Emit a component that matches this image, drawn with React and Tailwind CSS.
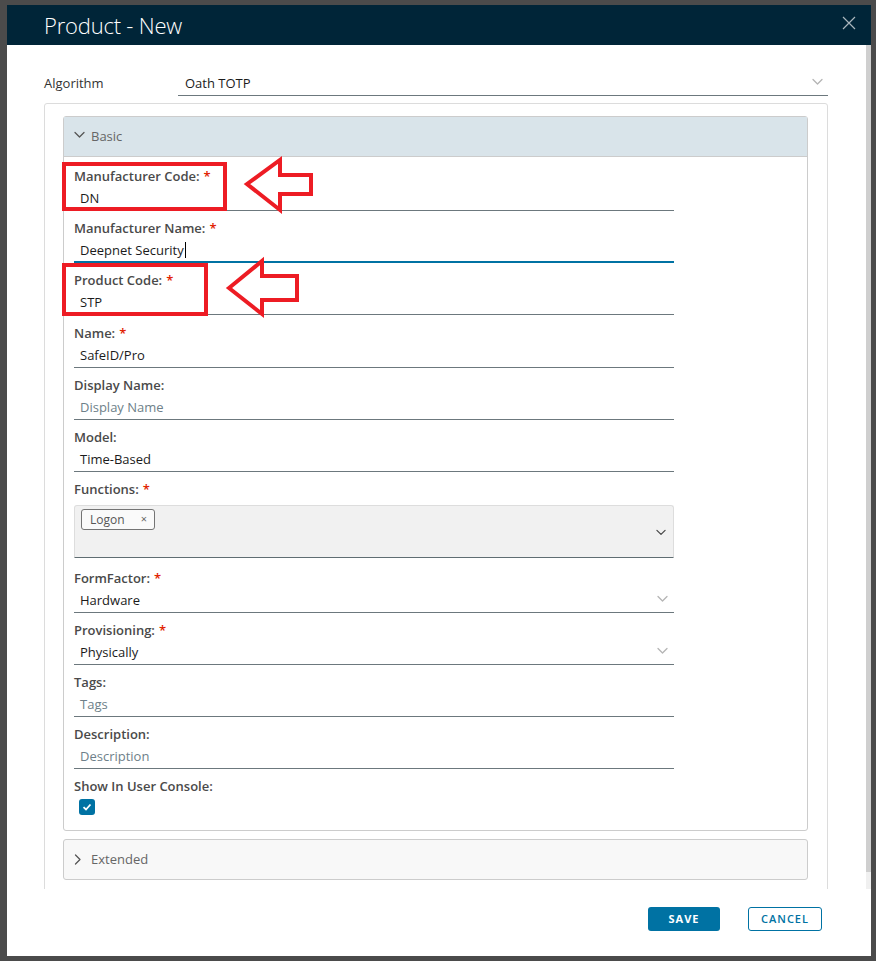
import React from "react";

const font = "font-['Open_Sans','Liberation_Sans',sans-serif]";

function Chevron({ className = "", dir = "down" }) {
  const d = dir === "down" ? "M1 1.5 L5.5 6 L10 1.5" : "M1.5 1 L6 5.5 L1.5 10";
  return (
    <svg viewBox="0 0 11 11" className={className} fill="none">
      <path d={d} stroke="currentColor" strokeWidth="1.3" strokeLinecap="round" strokeLinejoin="round" />
    </svg>
  );
}

function Label({ text, required }) {
  return (
    <div className="h-[18px] text-[13px] font-semibold leading-[18px] text-[#4a4a4a]">
      {text}
      {required && <span className="ml-[4px] text-[#e12200]">*</span>}
    </div>
  );
}

function TextField({ label, required, value, placeholder, focused, caret, select, gap = "mb-[8px]" }) {
  return (
    <div className={"w-[600px] " + gap}>
      <Label text={label} required={required} />
      <div
        className={
          "mt-[2px] flex h-[24px] items-center justify-between pl-[6px] pr-[6px] " +
          (focused ? "border-b-2 border-[#0072a3]" : "border-b border-[#6c787d]")
        }
      >
        {value ? (
          <span className="text-[13px] text-[#1b1b1b]">
            {value}
            {caret && <span className="ml-[1px] inline-block h-[16px] w-px translate-y-[3px] bg-black" />}
          </span>
        ) : (
          <span className="text-[13px] text-[#6e7f89]">{placeholder}</span>
        )}
        {select && <Chevron className="h-[11px] w-[11px] text-[#b5b5b5]" />}
      </div>
    </div>
  );
}

export default function App() {
  return (
    <div className={"relative h-[961px] w-[876px] overflow-hidden bg-[#4b4b4b] pl-[7px] pt-[5px] " + font}>
      <div className="flex h-[951px] w-[864px] flex-col bg-white">
        {/* header */}
        <div className="flex h-[40px] shrink-0 items-center justify-between bg-[#002538] pl-[37px] pr-[15px]">
          <span className="text-[22px] font-light leading-none tracking-[-0.2px] text-white">Product - New</span>
          <svg viewBox="0 0 14 14" className="mb-[5px] h-[14px] w-[14px] text-[#aab6bd]">
            <path d="M1 1 L13 13 M13 1 L1 13" stroke="currentColor" strokeWidth="1.2" />
          </svg>
        </div>

        {/* scrolling body */}
        <div className="flex h-[844px] shrink-0">
          <div className="flex-1 overflow-hidden pl-[37px] pr-[38px]">
            <div className="mt-[27px] flex items-center">
              <div className="w-[134px] text-[13px] text-[#333]">Algorithm</div>
              <div className="flex h-[24px] flex-1 items-center justify-between border-b border-[#6c787d] pl-[7px] pr-[5px]">
                <span className="text-[13px] text-[#1b1b1b]">Oath TOTP</span>
                <Chevron className="h-[11px] w-[11px] text-[#b5b5b5]" />
              </div>
            </div>

            <div className="mt-[7px] rounded-[3px] border border-[#dcdcdc] pb-[40px] pl-[18px] pr-[19px] pt-[12px]">
              {/* Basic */}
              <div className="rounded-[3px] border border-[#cccccc]">
                <div className="flex h-[40px] items-center gap-[6px] border-b border-[#cccccc] bg-[#d9e4ea] pl-[10px]">
                  <Chevron className="h-[11px] w-[11px] text-[#565656]" />
                  <span className="text-[13px] text-[#666]">Basic</span>
                </div>
                <div className="pb-[15px] pl-[10px] pt-[10px]">
                  <TextField label="Manufacturer Code:" required value="DN" />
                  <TextField label="Manufacturer Name:" required value="Deepnet Security" focused caret />
                  <TextField label="Product Code:" required value="STP" gap="mb-[9px]" />
                  <TextField label="Name:" required value="SafeID/Pro" />
                  <TextField label="Display Name:" placeholder="Display Name" />
                  <TextField label="Model:" value="Time-Based" />

                  <div className="mb-[11px] w-[600px]">
                    <Label text="Functions:" required />
                    <div className="mt-[7px] flex h-[53px] items-start justify-between rounded-t-[3px] border border-b-[#5f6d72] border-[#dddddd] bg-[#f1f1f1] pl-[6px] pr-[7px] pt-[3px]">
                      <span className="flex h-[21px] w-[74px] items-center justify-between rounded-[3px] border border-[#747474] bg-[#fafafa] pl-[8px] pr-[7px] text-[12px] text-[#565656]">
                        Logon
                        <span className="text-[11px] text-[#666]">×</span>
                      </span>
                      <Chevron className="mt-[20px] h-[10px] w-[10px] text-[#444]" />
                    </div>
                  </div>

                  <TextField label="FormFactor:" required value="Hardware" select />
                  <TextField label="Provisioning:" required value="Physically" select />
                  <TextField label="Tags:" placeholder="Tags" />
                  <TextField label="Description:" placeholder="Description" />

                  <Label text="Show In User Console:" />
                  <div className="ml-[5px] mt-[4px] flex h-[16px] w-[16px] items-center justify-center rounded-[3px] bg-[#0072a3]">
                    <svg viewBox="0 0 10 10" className="h-[10px] w-[10px]">
                      <path d="M1.5 5.2 L4 7.5 L8.5 2.5" stroke="white" strokeWidth="1.8" fill="none" />
                    </svg>
                  </div>
                </div>
              </div>

              {/* Extended */}
              <div className="mt-[8px] flex h-[41px] items-center gap-[6px] rounded-[3px] border border-[#cccccc] bg-[#f8f8f8] pl-[10px]">
                <Chevron dir="right" className="h-[11px] w-[11px] text-[#565656]" />
                <span className="text-[13px] text-[#666]">Extended</span>
              </div>
            </div>
          </div>
          {/* scrollbar */}
          <div className="w-[5px] bg-[#f0f0f0]">
            <div className="h-[827px] bg-[#cfcfcf]" />
          </div>
        </div>

        {/* footer */}
        <div className="flex flex-1 items-start justify-end gap-[28px] pr-[49px] pt-[18px]">
          <button className="h-[24px] w-[72px] rounded-[3px] bg-[#0072a3] text-[11px] font-bold tracking-[1px] text-white">
            SAVE
          </button>
          <button className="h-[24px] w-[74px] rounded-[3px] border border-[#0072a3] bg-white text-[11px] font-semibold tracking-[1px] text-[#0072a3]">
            CANCEL
          </button>
        </div>
      </div>

      {/* red call-outs */}
      <div className="absolute left-[62px] top-[162px] h-[49px] w-[165px] border-4 border-[#ed1c24]" />
      <div className="absolute left-[62px] top-[263px] h-[53px] w-[146px] border-4 border-[#ed1c24]" />
      <svg className="absolute left-[240px] top-[155px]" width="78" height="62" viewBox="0 0 78 62">
        <polygon points="7,29 40,5 40,20 71,20 71,39 40,39 40,55" fill="none" stroke="#ed1c24" strokeWidth="4" />
      </svg>
      <svg className="absolute left-[222px] top-[255px]" width="80" height="65" viewBox="0 0 80 65">
        <polygon points="7,33 40,6 40,21 75,21 75,45 40,45 40,59" fill="none" stroke="#ed1c24" strokeWidth="4" />
      </svg>
    </div>
  );
}
